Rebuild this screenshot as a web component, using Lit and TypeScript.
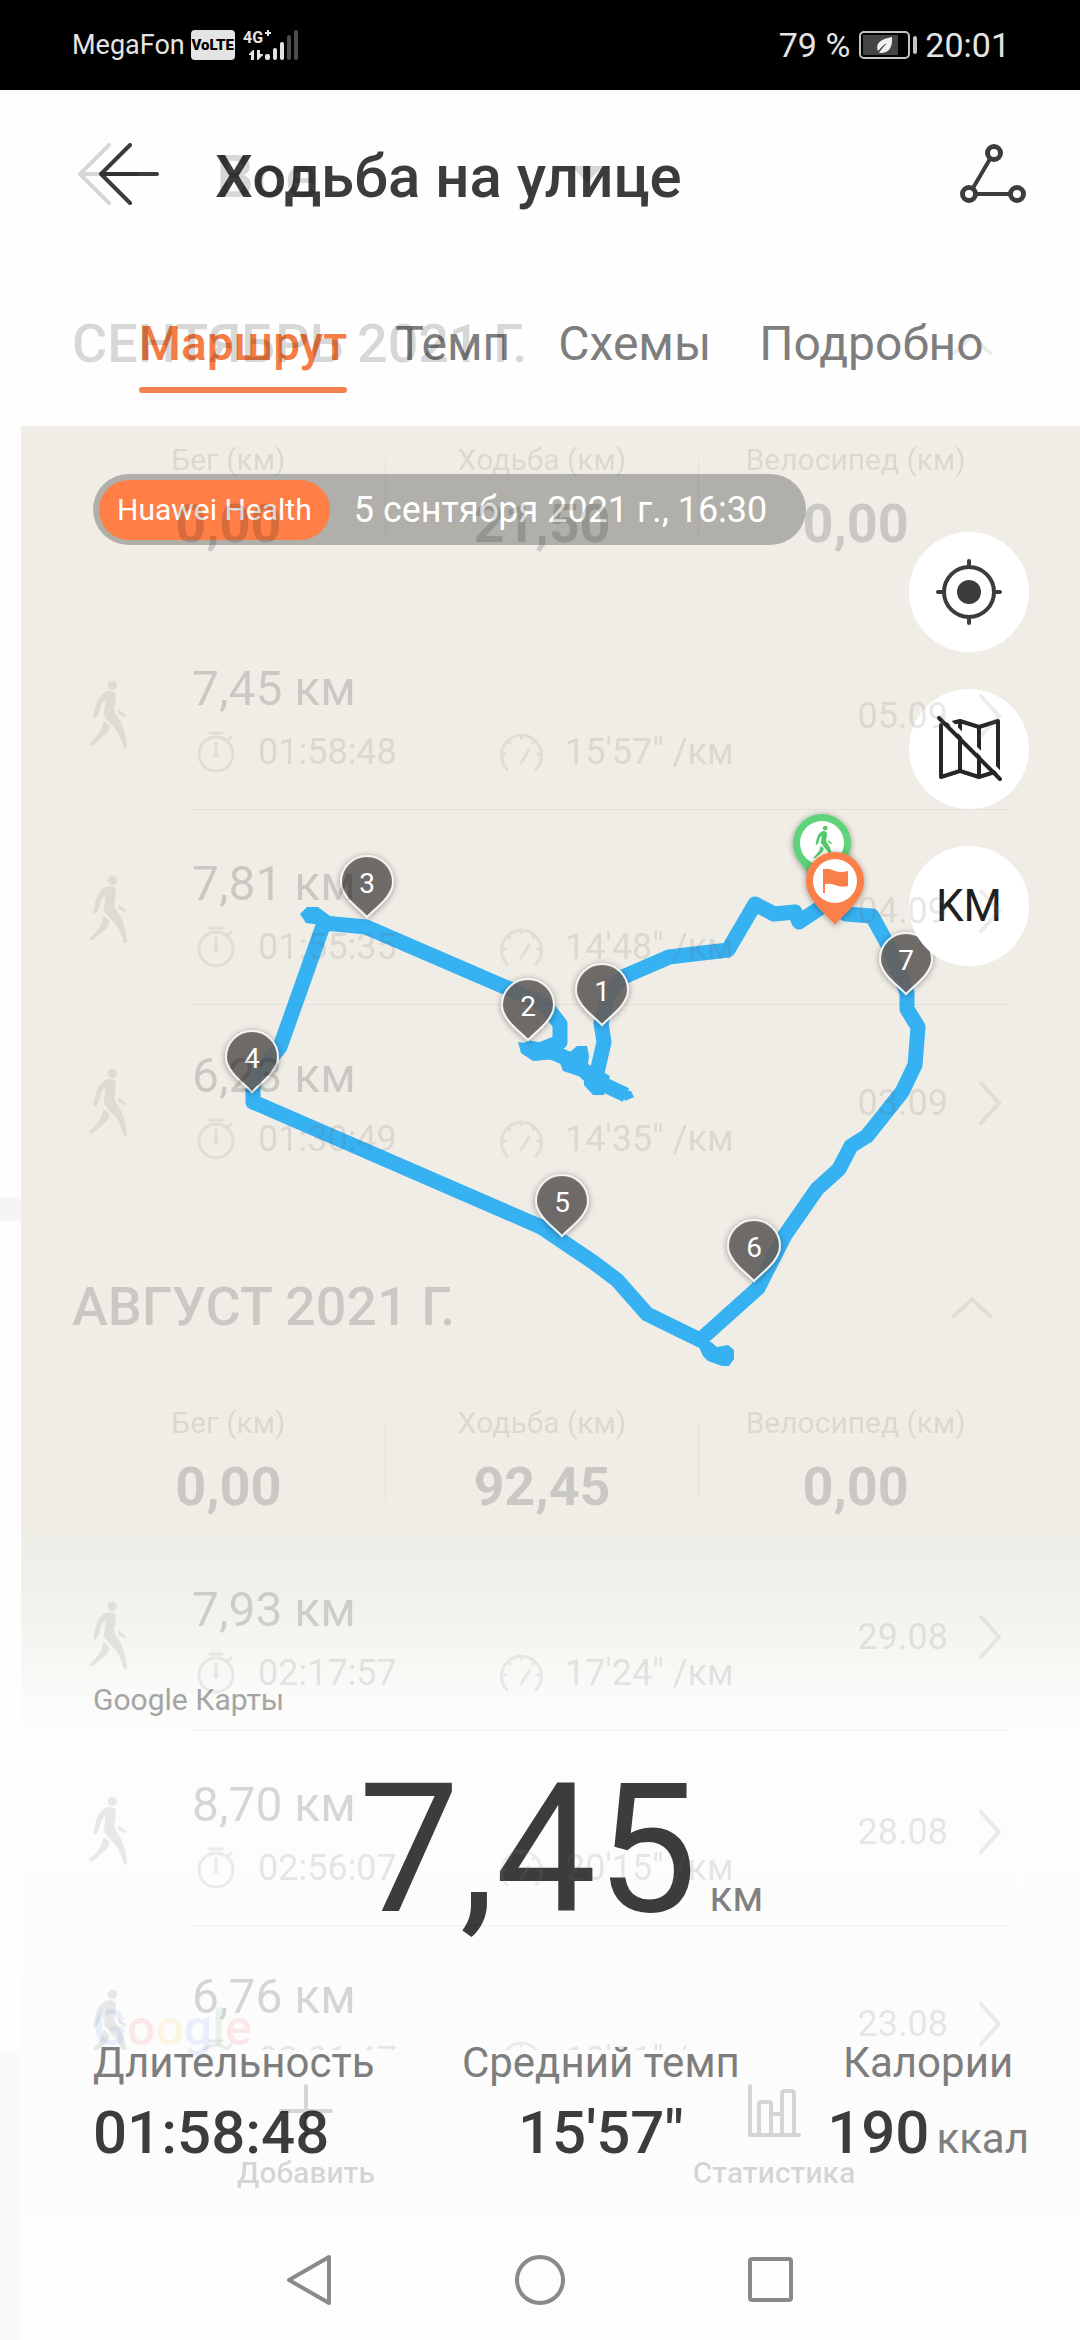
import { LitElement, html, css, svg, nothing } from "lit";
import { customElement, property } from "lit/decorators.js";

interface Walk {
  distance: string;
  time: string;
  pace: string;
  date: string;
}

interface Month {
  title: string;
  totals: { label: string; value: string }[];
  walks: Walk[];
}

const MONTHS: Month[] = [
  {
    title: "СЕНТЯБРЬ 2021 Г.",
    totals: [
      { label: "Бег (км)", value: "0,00" },
      { label: "Ходьба (км)", value: "21,50" },
      { label: "Велосипед (км)", value: "0,00" },
    ],
    walks: [
      { distance: "7,45 км", time: "01:58:48", pace: "15'57\" /км", date: "05.09" },
      { distance: "7,81 км", time: "01:55:35", pace: "14'48\" /км", date: "04.09" },
      { distance: "6,23 км", time: "01:30:49", pace: "14'35\" /км", date: "03.09" },
    ],
  },
  {
    title: "АВГУСТ 2021 Г.",
    totals: [
      { label: "Бег (км)", value: "0,00" },
      { label: "Ходьба (км)", value: "92,45" },
      { label: "Велосипед (км)", value: "0,00" },
    ],
    walks: [
      { distance: "7,93 км", time: "02:17:57", pace: "17'24\" /км", date: "29.08" },
      { distance: "8,70 км", time: "02:56:07", pace: "20'15\" /км", date: "28.08" },
      { distance: "6,76 км", time: "02:01:47", pace: "18'01\" /км", date: "23.08" },
    ],
  },
];

const KM_PINS = [
  { n: 1, x: 602, y: 1025 },
  { n: 2, x: 528, y: 1040 },
  { n: 3, x: 367, y: 917 },
  { n: 4, x: 252, y: 1092 },
  { n: 5, x: 562, y: 1236 },
  { n: 6, x: 754, y: 1281 },
  { n: 7, x: 906, y: 994 },
];

const walkerShape = svg`
  <circle cx="128" cy="76" r="14" />
  <path d="M105 97Q112 92 125 94Q139 96 139 108Q138 130 134 145Q133 155 140 165Q158 190 164 215Q172 245 172 262Q168 268 162 262Q150 225 140 210Q120 190 105 170Q100 160 104 150Q108 130 107 118Q94 130 88 160Q84 172 74 177Q70 175 72 165Q76 140 85 118Q93 104 105 97z" />
  <path d="M145 147L168 165Q170 170 164 171L146 161z" />
  <path d="M102 182L120 198Q118 215 106 224Q80 247 66 256Q56 258 60 250Q82 230 90 215Q98 200 102 182z" />`;

const walkerIcon = html`<svg class="walker" width="40" height="70" viewBox="55 60 120 210" fill="currentColor">${walkerShape}</svg>`;

const arrowIcon = html`<svg width="60" height="62" viewBox="0 0 60 62" fill="none" stroke="currentColor" stroke-width="4" stroke-linecap="round" stroke-linejoin="round">
  <path d="M31 2L2 31L31 60M2 31H58" /></svg>`;

const stopwatchIcon = html`<svg width="40" height="42" viewBox="0 0 40 42" fill="none" stroke="currentColor" stroke-width="3" stroke-linecap="round">
  <circle cx="20" cy="23" r="17" /><path d="M14 2H26M32 9L35 6" /><path d="M20 12V24" /><circle cx="20" cy="24" r="1" /></svg>`;

const gaugeIcon = html`<svg width="43" height="40" viewBox="0 0 43 40" fill="none" stroke="currentColor" stroke-width="3" stroke-linecap="round">
  <path d="M7 37A20 20 0 1 1 36 37" />
  <path d="M21.5 3V6M3 22H5M40 22H38M9 10L10 11M34 10L33 11" />
  <path d="M21 31L29 18" /></svg>`;

@customElement("phone-status")
export class PhoneStatus extends LitElement {
  static styles = css`
    :host {
      display: flex;
      align-items: center;
      justify-content: space-between;
      height: 90px;
      padding: 0 70px 0 72px;
      background: #000;
      color: #e4e4e4;
    }
    .group {
      display: flex;
      align-items: center;
    }
    .carrier {
      font-size: 27px;
    }
    .volte {
      display: flex;
      align-items: center;
      justify-content: center;
      width: 44px;
      height: 30px;
      margin: 0 8px 0 6px;
      border-radius: 4px;
      background: #e4e4e4;
      color: #000;
      font-size: 15px;
      font-weight: 900;
    }
    .level {
      font-size: 34px;
    }
    .battery {
      margin: 0 8px 0 9px;
    }
  `;

  render() {
    return html`
      <div class="group">
        <span class="carrier">MegaFon</span>
        <span class="volte">VoLTE</span>
        <svg width="58" height="40" viewBox="0 -4 58 40" fill="#e4e4e4">
          <text x="0" y="14" font-size="16" font-weight="700">4G</text>
          <path d="M22 3h2v-2h2v2h2v2h-2v2h-2v-2h-2z" />
          <path d="M11 31V21h-1l-4 4v1h2v5zM14 21v10h1l5-5v-1h-3v-4z" />
          <rect x="22" y="25" width="5" height="6" rx="2" />
          <rect x="30" y="19" width="4" height="12" rx="2" />
          <rect x="37" y="13" width="4" height="18" rx="2" />
          <g fill="#4c4c4c">
            <rect x="44" y="6" width="4" height="25" rx="2" />
            <rect x="51" y="1" width="4" height="30" rx="2" />
          </g>
        </svg>
      </div>
      <div class="group">
        <span class="level">79 %</span>
        <svg class="battery" width="58" height="28" viewBox="0 0 58 28">
          <rect x="1" y="1" width="49" height="26" rx="4" fill="none" stroke="#c4c4c4" stroke-width="2" />
          <rect x="4" y="4" width="35" height="20" fill="#444" />
          <rect x="54" y="5" width="4" height="18" rx="2" fill="#c4c4c4" />
          <path d="M33 6C21 8 16 13 19 20C21 18 24 14 28 12C25 15 22 19 20 22C29 23 34 17 33 6z" fill="#f2f2f2" />
        </svg>
        <span class="level">20:01</span>
      </div>
    `;
  }
}

@customElement("walk-history")
export class WalkHistory extends LitElement {
  @property({ attribute: false }) months: Month[] = [];

  static styles = css`
    :host {
      display: flex;
      flex-direction: column;
      opacity: 0.15;
      color: #000;
      overflow: hidden;
    }
    button {
      border: 0;
      padding: 0;
      background: none;
      color: inherit;
      font: inherit;
    }
    svg {
      display: block;
      flex: none;
    }
    .bar {
      display: flex;
      align-items: center;
      flex: none;
      height: 168px;
      padding-left: 78px;
    }
    h2,
    h3 {
      margin: 0;
      font-weight: 500;
    }
    .bar h2 {
      margin-left: 78px;
      padding-top: 4px;
      font-size: 60px;
    }
    .caret {
      margin-left: 250px;
    }
    .list {
      flex: 1 1 0;
      min-height: 0;
      overflow: hidden;
    }
    .month + .month {
      border-top: 24px solid transparent;
      border-image: linear-gradient(to right, rgba(0, 0, 0, 0.24) 21px, rgba(0, 0, 0, 0.04) 21px) 24 0 0 0;
    }
    .month-head {
      display: flex;
      align-items: center;
      justify-content: space-between;
      padding: 54px 88px 0 72px;
    }
    .month-head h3 {
      font-size: 54px;
      line-height: 64px;
    }
    .totals {
      display: grid;
      grid-template-columns: 1fr 1px 1fr 1px 1fr;
      align-items: center;
      padding: 64px 68px 17px 72px;
      text-align: center;
    }
    .month:first-child .totals {
      padding-bottom: 59px;
    }
    .rule {
      height: 78px;
      background: rgba(0, 0, 0, 0.35);
    }
    .total-label {
      margin-bottom: 12px;
      color: #666;
      font-size: 30px;
      line-height: 40px;
    }
    .total-value {
      font-size: 54px;
      font-weight: 700;
      line-height: 64px;
    }
    .walk {
      display: flex;
      align-items: center;
      padding: 0 72px;
    }
    .walker {
      margin: 4px 64px 0 16px;
      color: #777;
    }
    .body {
      display: flex;
      align-items: center;
      flex: 1;
      padding: 46px 6px 35px 0;
      border-bottom: 1px solid rgba(0, 0, 0, 0.3);
    }
    .walk:last-child .body {
      padding-top: 43px;
      border-color: transparent;
    }
    .main {
      flex: 1;
    }
    .distance {
      margin-bottom: 13px;
      font-size: 48px;
      line-height: 56px;
    }
    .meta {
      display: grid;
      grid-template-columns: 304px auto;
      padding-left: 4px;
      color: #666;
      font-size: 36px;
      line-height: 44px;
    }
    .stat {
      display: flex;
      align-items: center;
      gap: 22px;
    }
    .stat svg {
      color: #888;
    }
    .when {
      display: flex;
      align-items: center;
      gap: 30px;
      padding-bottom: 4px;
      color: #666;
      font-size: 36px;
    }
    .chevron {
      color: #888;
    }
    .tools {
      display: flex;
      flex: none;
      height: 170px;
      padding: 0 72px;
      background: linear-gradient(to right, rgba(0, 0, 0, 0.12) 21px, transparent 21px);
      box-sizing: border-box;
    }
    .tool {
      display: flex;
      flex: 1;
      flex-direction: column;
      align-items: center;
      justify-content: flex-start;
      gap: 15px;
      padding-top: 34px;
      font-size: 30px;
      font-weight: 500;
      line-height: 40px;
    }
  `;

  private renderWalk(w: Walk) {
    return html`<div class="walk">
      ${walkerIcon}
      <div class="body">
        <div class="main">
          <div class="distance">${w.distance}</div>
          <div class="meta">
            <span class="stat">${stopwatchIcon}${w.time}</span>
            <span class="stat">${gaugeIcon}${w.pace}</span>
          </div>
        </div>
        <div class="when">
          <span>${w.date}</span>
          <svg class="chevron" width="24" height="44" viewBox="0 0 24 44" fill="none" stroke="currentColor" stroke-width="4" stroke-linecap="round">
            <path d="M3 2L21 22L3 42" />
          </svg>
        </div>
      </div>
    </div>`;
  }

  render() {
    return html`
      <div class="bar">
        <button aria-label="Назад">${arrowIcon}</button>
        <h2>Все</h2>
        <svg class="caret" width="40" height="22" viewBox="0 0 40 22" fill="#000"><path d="M4 3H36L20 20z" /></svg>
      </div>
      <div class="list">
        ${this.months.map(
          (m) => html`<section class="month">
            <div class="month-head">
              <h3>${m.title}</h3>
              <svg class="chevron" width="40" height="22" viewBox="0 0 40 22" fill="none" stroke="currentColor" stroke-width="4" stroke-linecap="round">
                <path d="M2 20L20 3L38 20" />
              </svg>
            </div>
            <div class="totals">
              ${m.totals.map(
                (t, i) => html`${i ? html`<span class="rule"></span>` : nothing}
                  <div>
                    <div class="total-label">${t.label}</div>
                    <div class="total-value">${t.value}</div>
                  </div>`
              )}
            </div>
            <div>${m.walks.map((w) => this.renderWalk(w))}</div>
          </section>`
        )}
      </div>
      <div class="tools">
        <button class="tool">
          <svg width="54" height="54" viewBox="0 0 54 54" stroke="#000" stroke-width="4" stroke-linecap="round">
            <path d="M27 2V52M2 27H52" />
          </svg>
          Добавить
        </button>
        <button class="tool">
          <svg width="54" height="54" viewBox="0 0 54 54" fill="none" stroke="#000" stroke-width="4" stroke-linecap="round" stroke-linejoin="round">
            <path d="M3 2V51H52M12 51V20Q12 18 14 18H22Q24 18 24 20V51M24 30H35M35 51V10Q35 7 38 7H44Q47 7 47 10V51" />
          </svg>
          Статистика
        </button>
      </div>
    `;
  }
}

@customElement("workout-route")
export class WorkoutRoute extends LitElement {
  static styles = css`
    :host {
      display: flex;
      flex-direction: column;
      color: #3c3c3c;
    }
    button {
      border: 0;
      padding: 0;
      background: none;
      color: inherit;
      font: inherit;
    }
    svg {
      display: block;
    }
    .bar {
      display: flex;
      align-items: center;
      height: 168px;
      padding: 0 75px 0 78px;
      box-sizing: border-box;
    }
    h1 {
      flex: 1;
      margin: 0 0 0 56px;
      padding-top: 4px;
      font-size: 60px;
      font-weight: 500;
    }
    .tabs {
      display: flex;
      gap: 48px;
      padding: 58px 0 33px 118px;
    }
    .tab {
      color: #7e7e7e;
      font-size: 48px;
      line-height: 56px;
      white-space: nowrap;
    }
    .tab-line {
      display: block;
      height: 6px;
      margin-top: 15px;
      border-radius: 3px;
    }
    .tab[aria-selected="true"] {
      color: #f57c45;
      font-weight: 500;
    }
    .tab[aria-selected="true"] .tab-line {
      background: #f3814f;
    }
    .map {
      position: relative;
      display: flex;
      flex: 1;
      flex-direction: column;
      padding: 48px 72px 52px;
      background: linear-gradient(
        to bottom,
        #efede5 1105px,
        #eeeeea 1130px,
        #f1f1ee 1175px,
        #f5f5f2 1215px,
        #fafaf8 1265px,
        #fdfdfb 1310px,
        #fcfcfc 1560px
      );
    }
    .canvas {
      position: absolute;
      top: 0;
      left: 0;
      width: 100%;
    }
    .logo {
      position: absolute;
      left: 72px;
      bottom: 164px;
      font-size: 50px;
      font-weight: 500;
      line-height: 56px;
      opacity: 0.1;
    }
    .blue {
      color: #4285f4;
    }
    .red {
      color: #ea4335;
    }
    .yellow {
      color: #fbbc05;
    }
    .green {
      color: #34a853;
    }
    .top,
    .source,
    .distance,
    .metrics {
      position: relative;
    }
    .top {
      display: flex;
      align-items: flex-start;
      justify-content: space-between;
      flex: 1;
    }
    .badge {
      display: flex;
      align-items: center;
      height: 59px;
      padding: 6px 39px 6px 6px;
      border-radius: 36px;
      background: rgba(0, 0, 0, 0.26);
      color: #fff;
      font-size: 36px;
    }
    .app {
      margin-right: 24px;
      padding: 0 18px;
      border-radius: 30px;
      background: #ff7f47;
      font-size: 30px;
      line-height: 60px;
    }
    .controls {
      display: flex;
      flex-direction: column;
      gap: 37px;
      padding-top: 58px;
    }
    .round {
      display: flex;
      align-items: center;
      justify-content: center;
      width: 120px;
      height: 120px;
      border-radius: 50%;
      background: #fff;
    }
    .units {
      color: #202020;
      font-size: 44px;
    }
    .source {
      margin-bottom: 42px;
      color: #a5a5a4;
      font-size: 30px;
      line-height: 36px;
    }
    .distance {
      display: flex;
      align-items: baseline;
      justify-content: center;
      gap: 12px;
      margin-bottom: 99px;
      font-size: 180px;
      line-height: 180px;
    }
    .unit {
      color: #808080;
      font-size: 42px;
      font-weight: 400;
      line-height: 48px;
    }
    .metrics {
      display: flex;
      justify-content: space-between;
      margin: 0;
    }
    .metrics div {
      text-align: center;
    }
    .metrics div:first-child {
      text-align: left;
    }
    dt {
      margin-bottom: 11px;
      color: #7e7e7e;
      font-size: 42px;
      line-height: 48px;
      white-space: nowrap;
    }
    dd {
      margin: 0;
      font-size: 60px;
      font-weight: 500;
      line-height: 70px;
    }
    dd .unit {
      margin-left: 7px;
    }
  `;

  private renderCanvas() {
    return html`<svg class="canvas" viewBox="21 426 1080 1100" role="img" aria-label="Маршрут">
      <defs>
        <filter id="soft" x="-30%" y="-30%" width="160%" height="160%">
          <feDropShadow dx="0" dy="1" stdDeviation="3" flood-opacity="0.4" />
        </filter>
      </defs>
      <g fill="none" stroke="#36b1f2" stroke-width="15" stroke-linejoin="round">
        <path d="M834 905L846 914L872 916L888 945L907 993V1009L918 1027L915 1065L902 1092L867 1136L851 1146L839 1169L817 1189L785 1235L758 1288L700 1340L647 1314L617 1280L593 1262L541 1227L253 1102V1080L280 1047L324 923L366 927L512 990L546 1006L560 1024V1042L540 1050L530 1048L536 1053L552 1052L575 1062L594 1080L626 1095" />
        <path d="M596 1077L604 1042L601 1023L608 995L623 977L669 957L728 950L755 904L774 914L795 912L799 922L832 900" />
      </g>
      <g fill="#36b1f2">
        <path d="M518 1042L534 1044L548 1050L540 1060L533 1061L521 1053z" />
        <path d="M560 1063L570 1052L577 1046H587L589 1056L588 1064L610 1076L606 1088L604 1095H593L584 1085V1078L563 1071z" />
        <path d="M620 1090L631 1091L634 1097L625 1101z" />
        <path d="M300 914L307 907H318L330 916L328 926L306 923z" />
        <path d="M695 1338L711 1342L717 1347L728 1345L734 1350V1359L729 1366H722L708 1361L703 1356z" />
      </g>
      ${KM_PINS.map(
        (p) => svg`<g transform="translate(${p.x} ${p.y})">
          <path d="M0 0C-7 -8 -26 -20 -26 -35A26 26 0 0 1 26 -35C26 -20 7 -8 0 0z" fill="rgba(100,98,96,0.88)" stroke="#f4f4f4" stroke-width="2" filter="url(#soft)" />
          <text y="-24" text-anchor="middle" font-size="28" fill="#fff">${p.n}</text>
        </g>`
      )}
      <g transform="translate(822 887)">
        <path d="M0 0C-7 -10 -29 -24 -29 -44A29 29 0 0 1 29 -44C29 -24 7 -10 0 0z" fill="#5fd37a" filter="url(#soft)" />
        <circle cy="-44" r="22" fill="#fff" />
        <svg x="-9" y="-63" width="20" height="38" viewBox="55 60 120 210" fill="#4fc96b">${walkerShape}</svg>
      </g>
      <g transform="translate(835 925)">
        <path d="M0 0C-7 -10 -29 -24 -29 -44A29 29 0 0 1 29 -44C29 -24 7 -10 0 0z" fill="#fb7f48" filter="url(#soft)" />
        <circle cy="-44" r="22" fill="#fff" />
        <path d="M-12 -56Q-6 -57 0 -54Q6 -52 13 -54V-39Q6 -37 0 -40Q-5 -42 -10 -41V-32H-12z" fill="#fb7f48" />
      </g>
    </svg>`;
  }

  render() {
    const tabs = ["Маршрут", "Темп", "Схемы", "Подробно"];
    return html`
      <header class="bar">
        <button aria-label="Назад">${arrowIcon}</button>
        <h1>Ходьба на улице</h1>
        <button aria-label="Поделиться">
          <svg width="66" height="60" viewBox="0 0 66 60" fill="none" stroke="currentColor" stroke-width="5">
            <circle cx="34" cy="9" r="6.5" /><circle cx="9" cy="50" r="6.5" /><circle cx="57" cy="50" r="6.5" />
            <path d="M30 15L13 44M16 50H50" stroke-width="4" />
          </svg>
        </button>
      </header>
      <nav class="tabs" role="tablist">
        ${tabs.map(
          (t, i) => html`<button class="tab" role="tab" aria-selected=${i === 0 ? "true" : "false"}>${t}<span class="tab-line"></span></button>`
        )}
      </nav>
      <section class="map">
        ${this.renderCanvas()}
        <div class="logo"><span class="blue">G</span><span class="red">o</span><span class="yellow">o</span><span class="blue">g</span><span class="green">l</span><span class="red">e</span></div>
        <div class="top">
          <div class="badge"><span class="app">Huawei Health</span><span>5 сентября 2021 г., 16:30</span></div>
          <div class="controls">
            <button class="round" aria-label="Моё местоположение">
              <svg width="68" height="68" viewBox="0 0 68 68" fill="none" stroke="#3c3c3c" stroke-width="4" stroke-linecap="round">
                <circle cx="34" cy="34" r="25" /><circle cx="34" cy="34" r="12" fill="#3c3c3c" stroke="none" />
                <path d="M34 3V8M34 60V65M3 34H8M60 34H65" />
              </svg>
            </button>
            <button class="round" aria-label="Скрыть карту">
              <svg width="66" height="66" viewBox="0 0 66 66" fill="none" stroke="#262626" stroke-width="4" stroke-linecap="round" stroke-linejoin="round">
                <path d="M5 9V61L24 55L43 61L62 55V5L43 11L24 5L12 8M24 5V55M43 11V61" />
                <path d="M7 -1L67 60" stroke="#fff" stroke-width="4" />
                <path d="M3 2L64 63" />
              </svg>
            </button>
            <button class="round units">KM</button>
          </div>
        </div>
        <div class="source">Google Карты</div>
        <div class="distance"><span>7,45</span><span class="unit">км</span></div>
        <dl class="metrics">
          <div><dt>Длительность</dt><dd>01:58:48</dd></div>
          <div><dt>Средний темп</dt><dd>15'57"</dd></div>
          <div><dt>Калории</dt><dd>190<span class="unit">ккал</span></dd></div>
        </dl>
      </section>
    `;
  }
}

@customElement("app-root")
export class AppRoot extends LitElement {
  static styles = css`
    :host {
      display: flex;
      flex-direction: column;
      min-height: 100vh;
      background: #fefefe;
      font-family: Roboto, "Noto Sans", sans-serif;
    }
    .stage {
      position: relative;
      display: flex;
      flex: 1;
      overflow: hidden;
    }
    .front {
      flex: none;
      width: 100%;
      margin-left: 21px;
    }
    .back {
      position: absolute;
      inset: 0;
    }
    .keys {
      display: flex;
      align-items: center;
      justify-content: center;
      gap: 171px;
      height: 120px;
      background: linear-gradient(to right, #fafafa 21px, #fdfdfd 21px);
    }
    .key {
      display: flex;
      justify-content: center;
      width: 60px;
      padding: 0;
      border: 0;
      background: none;
    }
  `;

  render() {
    return html`
      <phone-status></phone-status>
      <main class="stage">
        <workout-route class="front"></workout-route>
        <walk-history class="back" inert .months=${MONTHS}></walk-history>
      </main>
      <nav class="keys">
        <button class="key" aria-label="Назад">
          <svg width="52" height="52" viewBox="0 0 52 52" fill="none" stroke="#8a8a8a" stroke-width="4" stroke-linejoin="round">
            <path d="M46 3V49L6 26z" />
          </svg>
        </button>
        <button class="key" aria-label="Домой">
          <svg width="52" height="52" viewBox="0 0 52 52" fill="none" stroke="#8a8a8a" stroke-width="4"><circle cx="26" cy="26" r="23" /></svg>
        </button>
        <button class="key" aria-label="Недавние">
          <svg width="52" height="52" viewBox="0 0 52 52" fill="none" stroke="#8a8a8a" stroke-width="4"><rect x="5" y="5" width="41" height="41" rx="2" /></svg>
        </button>
      </nav>
    `;
  }
}
